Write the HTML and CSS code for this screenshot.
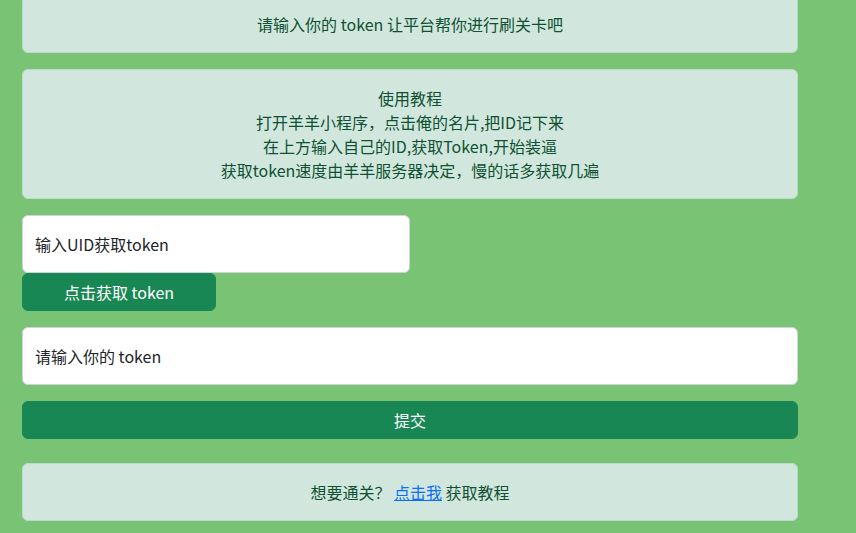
FILE: index.html
```html
<!DOCTYPE html>
<html lang="zh-CN">
<head>
<meta charset="utf-8">
<title>羊了个羊 刷关</title>
<link rel="stylesheet" href="styles.css">
</head>
<body>
<div class="page">
  <div class="alert alert-first">请输入你的 token 让平台帮你进行刷关卡吧</div>
  <div class="alert">
    使用教程<br>
    打开羊羊小程序，点击俺的名片,把ID记下来<br>
    在上方输入自己的ID,获取Token,开始装逼<br>
    获取token速度由羊羊服务器决定，慢的话多获取几遍
  </div>
  <div class="uid-group">
    <input class="field field-half" type="text" placeholder="输入UID获取token">
    <button class="btn btn-quarter" type="button">点击获取 token</button>
  </div>
  <input class="field field-full" type="text" placeholder="请输入你的 token">
  <button class="btn btn-full" type="button">提交</button>
  <div class="alert alert-last">想要通关？ <a href="#" class="link">点击我</a> 获取教程</div>
</div>
</body>
</html>
```
FILE: styles.css
```css
* { box-sizing: border-box; }
html, body {
  margin: 0;
  padding: 0;
  background: #78c474;
  height: 100%;
  overflow: hidden;
}
body {
  font-family: "Noto Sans CJK SC", "Noto Sans", "Liberation Sans", sans-serif;
  font-size: 16px;
  line-height: 24px;
  color: #212529;
}
.page {
  width: 776px;
  margin-left: 22px;
  margin-top: -5px;
  display: flex;
  flex-direction: column;
}
.alert {
  background: #d1e7dd;
  border: 1px solid #badbcc;
  color: #0f5132;
  border-radius: 6px;
  padding: 16px;
  text-align: center;
  margin-bottom: 16px;
}
.alert-last {
  margin-top: 8px;
}
.link {
  color: #0d6efd;
  text-decoration: underline;
}
.uid-group {
  display: flex;
  flex-direction: column;
  align-items: flex-start;
  margin-bottom: 16px;
}
.field {
  display: block;
  height: 58px;
  padding: 16px 12px;
  font-family: inherit;
  font-size: 16px;
  line-height: 24px;
  color: #212529;
  background: #fff;
  border: 1px solid #ced4da;
  border-radius: 6px;
  outline: none;
}
.field::placeholder { color: #212529; opacity: 1; }
.field-half { width: 388px; }
.field-full { width: 776px; margin-bottom: 16px; }
.btn {
  display: block;
  height: 38px;
  padding: 6px 12px;
  font-family: inherit;
  font-size: 16px;
  line-height: 24px;
  color: #fff;
  background: #198754;
  border: 1px solid #198754;
  border-radius: 6px;
  text-align: center;
  cursor: pointer;
}
.btn-quarter { width: 194px; }
.btn-full { width: 776px; margin-bottom: 16px; }
```
